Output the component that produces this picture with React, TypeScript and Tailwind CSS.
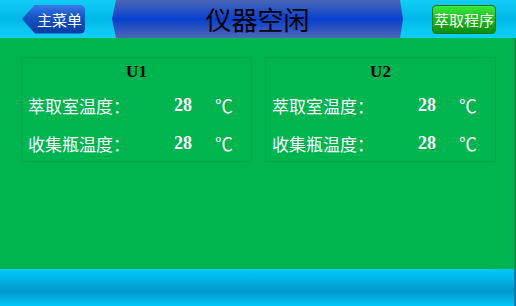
import type { FC } from "react";

const cjk = "font-['Noto_Sans_CJK_SC',sans-serif]";
const serif = "font-['Liberation_Serif','Times_New_Roman',serif]";

const units = [
	{ id: "U1", chamber: 28, bottle: 28 },
	{ id: "U2", chamber: 28, bottle: 28 },
];

const TempRow: FC<{ label: string; value: number }> = ({ label, value }) => (
	<div className="flex h-[38px] items-center text-white">
		<span className={`${cjk} w-[152px] pl-[6px] text-[17px] leading-none`}>{label}</span>
		<span className={`${serif} w-[41px] text-[18px] font-bold leading-none`}>{value}</span>
		<span className={`${cjk} text-[18px] leading-none`}>℃</span>
	</div>
);

const UnitCard: FC<{ id: string; chamber: number; bottle: number }> = ({ id, chamber, bottle }) => (
	<div className="w-[231px] h-[105px] border border-[#0aa64a]">
		<div className={`${serif} flex h-[28px] items-center justify-center text-[17px] font-bold text-black`}>
			{id}
		</div>
		<TempRow label="萃取室温度：" value={chamber} />
		<TempRow label="收集瓶温度：" value={bottle} />
	</div>
);

export default function App() {
	return (
		<div className="flex h-[306px] w-[516px] flex-col overflow-hidden">
			{/* ヘッダー */}
			<div className="flex h-[38px] shrink-0 items-center bg-[linear-gradient(180deg,#12ccf4_0%,#00b8e8_50%,#10d0f8_100%)]">
				<div className="ml-[22px] h-[29px] w-[63px] shrink-0 rounded-r-[5px] bg-[linear-gradient(180deg,#3a7ae6_0%,#1552c4_45%,#0a3a9e_100%)] [clip-path:polygon(13px_0,100%_0,100%_100%,13px_100%,0_50%)]">
					<div className={`${cjk} flex h-full items-center justify-end pr-[3px] text-[15px] leading-none text-white`}>
						主菜单
					</div>
				</div>
				<div className="ml-[27px] flex h-[38px] w-[291px] shrink-0 items-center justify-center bg-[linear-gradient(180deg,#4a66b8_0%,#2450c4_30%,#0840d0_50%,#2a52c0_75%,#4c68b8_100%)] [clip-path:polygon(4px_0,calc(100%-3px)_0,100%_50%,calc(100%-3px)_100%,4px_100%,0_50%)]">
					<span className={`${cjk} text-[26px] leading-none text-black`}>仪器空闲</span>
				</div>
				<div className="ml-[29px] flex h-[29px] w-[64px] shrink-0 items-center justify-center rounded-[4px] border border-[#0f7a18] bg-[linear-gradient(180deg,#3ee83a_0%,#1cc020_45%,#0e8a12_100%)]">
					<span className={`${cjk} text-[15px] leading-none text-white`}>萃取程序</span>
				</div>
			</div>

			{/* 本体 */}
			<div className="flex flex-1 gap-[13px] border-r-2 border-[#079248] bg-[#00b450] pl-[21px] pt-[19px]">
				{units.map((u) => (
					<UnitCard key={u.id} id={u.id} chamber={u.chamber} bottle={u.bottle} />
				))}
			</div>

			{/* フッター */}
			<div className="h-[37px] shrink-0 border-r-2 border-[#0078a8] bg-[linear-gradient(180deg,#00c8f8_0%,#00b0e2_35%,#0098cc_60%,#00b4e6_85%,#00c8f8_100%)]" />
		</div>
	);
}
